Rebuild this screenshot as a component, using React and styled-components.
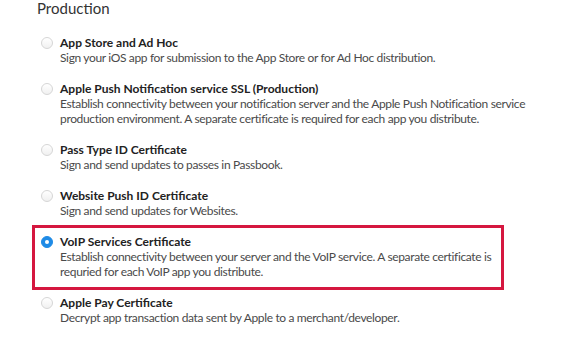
import React from 'react'
import styled, { createGlobalStyle } from 'styled-components'

const GlobalStyle = createGlobalStyle`
    html, body { margin: 0; padding: 0; background: #fff; }
    body { font-family: Lato, "Open Sans", sans-serif; color: #333; }
`

const Page = styled.div`
    padding: 0 0 0 37px;
`

const Heading = styled.h2`
    margin: 0 0 19px;
    font-size: 15px;
    font-weight: 400;
    line-height: 16px;
    color: #333;
`

const Options = styled.div`
    display: flex;
    flex-direction: column;
    gap: 16px;
    padding-left: 4px;
`

const Option = styled.label`
    position: relative;
    display: flex;
    gap: 7px;
    align-items: flex-start;
    cursor: pointer;

    /* annotation frame drawn over the selected row */
    &::before {
        content: '';
        display: ${p => (p.$highlight ? 'block' : 'none')};
        position: absolute;
        left: -9px;
        top: -9px;
        width: 472px;
        bottom: -11px;
        box-sizing: border-box;
        border: 3px solid #d5173f;
        pointer-events: none;
    }
`

const Radio = styled.span`
    flex: none;
    width: 12px;
    height: 12px;
    margin-top: 2px;
    border-radius: 50%;
    box-sizing: border-box;
    border: 1px solid ${p => (p.$checked ? '#1f8be6' : '#d6d6d6')};
    background: ${p => (p.$checked ? '#1f8be6' : 'linear-gradient(#fff, #f0f0f0)')};
    display: flex;
    align-items: center;
    justify-content: center;
    &::after {
        content: '';
        width: 4px;
        height: 4px;
        border-radius: 50%;
        background: #fff;
        display: ${p => (p.$checked ? 'block' : 'none')};
    }
`

const Text = styled.div`
    display: flex;
    flex-direction: column;
    max-width: 475px;
`

const Title = styled.span`
    font-size: 12px;
    font-weight: 700;
    line-height: 15px;
    color: #222;
`

const Desc = styled.span`
    font-size: 12px;
    letter-spacing: -0.35px;
    line-height: 15px;
    color: #4a4a4a;
`

const data = [
    { title: 'App Store and Ad Hoc', desc: 'Sign your iOS app for submission to the App Store or for Ad Hoc distribution.' },
    { title: 'Apple Push Notification service SSL (Production)', desc: 'Establish connectivity between your notification server and the Apple Push Notification service production environment. A separate certificate is required for each app you distribute.' },
    { title: 'Pass Type ID Certificate', desc: 'Sign and send updates to passes in Passbook.' },
    { title: 'Website Push ID Certificate', desc: 'Sign and send updates for Websites.' },
    { title: 'VoIP Services Certificate', desc: 'Establish connectivity between your server and the VoIP service. A separate certificate is requried for each VoIP app you distribute.', checked: true },
    { title: 'Apple Pay Certificate', desc: 'Decrypt app transaction data sent by Apple to a merchant/developer.' },
]

const App = () => {
    return (
        <Page>
            <GlobalStyle />
            <Heading>Production</Heading>
            <Options>
                {data.map(item => (
                    <Option key={item.title} $highlight={item.checked}>
                        <Radio $checked={item.checked} />
                        <Text>
                            <Title>{item.title}</Title>
                            <Desc>{item.desc}</Desc>
                        </Text>
                    </Option>
                ))}
            </Options>
        </Page>
    )
}

export default App
